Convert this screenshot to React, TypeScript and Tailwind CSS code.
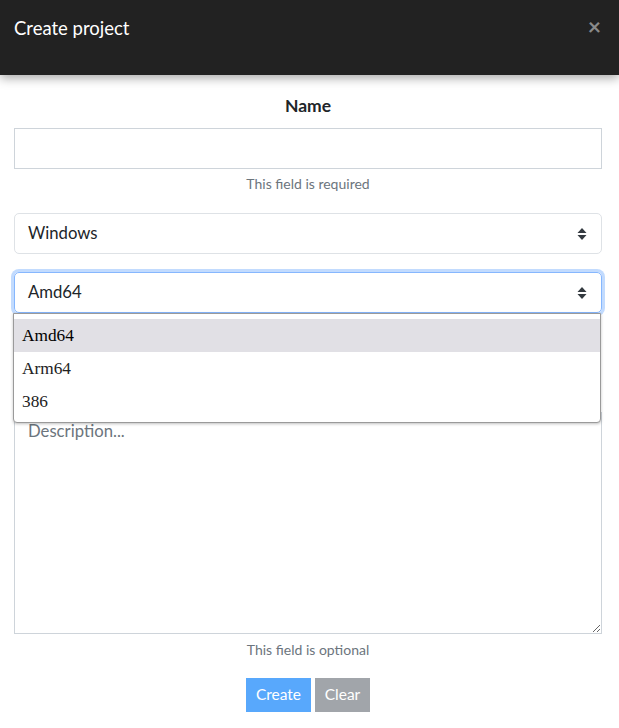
import { useState } from "react";

const archList = ["Amd64", "Arm64", "386"];

// Up/down caret used by the selects
const SortIcon = () => (
  <svg width="10" height="14" viewBox="0 0 10 14" className="fill-[#343a40]">
    <path d="M5 1 L9.5 6 H0.5 Z" />
    <path d="M5 13 L9.5 8 H0.5 Z" />
  </svg>
);

const App = () => {
  // States
  const [name, setName] = useState("");
  const [description, setDescription] = useState("");
  const [hovered] = useState("Amd64");

  return (
    <div className="min-h-[728px] bg-white font-['Lato','Open_Sans',sans-serif] text-[#212529]">
      {/* <============Header Part ============> */}
      <div className="relative z-10 flex h-[75px] items-start justify-between bg-[#222222] pl-[14px] pr-[14px] pt-[14px] shadow-[0_3px_10px_rgba(0,0,0,0.35)]">
        <h2 className="text-[18.5px] leading-[28px] text-white">Create project</h2>
        <button className="mr-[4px] mt-[-2px] text-[23px] font-bold leading-[28px] text-[#8a8a8a]">
          ×
        </button>
      </div>

      {/* <============Form ============> */}
      <div className="flex flex-col pl-[14px] pr-[17px] pt-[19px]">
        <label className="text-center text-[17.5px] font-bold leading-[24px] text-[#212529]">
          Name
        </label>
        <input
          className="mt-[10px] h-[41px] w-full border border-[#ced4da] px-3 text-[16px] outline-none"
          value={name}
          onChange={(e) => setName(e.target.value)}
        />
        <p className="mt-[5px] text-center text-[14px] leading-[20px] text-[#6c757d]">
          This field is required
        </p>

        <div className="mt-[19px] flex h-[41px] items-center justify-between rounded-[5px] border border-[#dee2e6] pl-[13px] pr-[14px] text-[16.7px] text-[#212529]">
          <span>Windows</span>
          <SortIcon />
        </div>

        <div className="relative mt-[18px]">
          <div className="flex h-[41px] items-center justify-between rounded-[5px] border border-[#86b7fe] pl-[13px] pr-[14px] text-[16.7px] text-[#212529] shadow-[0_0_0_3px_rgba(13,110,253,0.25)]">
            <span>Amd64</span>
            <SortIcon />
          </div>
          {/* Open option list */}
          <div className="absolute left-[-1px] top-[41px] z-20 w-[588px] rounded-b-[4px] border border-[#9a9a9a] bg-white pb-[4px] pt-[5px] font-['Liberation_Serif',serif] text-[17.3px] text-[#222] shadow-[0_1px_3px_rgba(0,0,0,0.25)]">
            {archList.map((arch) => (
              <div
                key={arch}
                className={`flex h-[33px] items-center px-[8px] ${
                  arch === hovered ? "bg-[#e1e0e5] text-black" : ""
                }`}
              >
                {arch}
              </div>
            ))}
          </div>
        </div>

        <textarea
          className="mt-[99px] h-[222px] w-full border border-[#ced4da] px-[13px] py-[6px] text-[16.7px] leading-[24px] outline-none placeholder:text-[#6c757d]"
          placeholder="Description..."
          value={description}
          onChange={(e) => setDescription(e.target.value)}
        />
        <p className="mt-[6px] text-center text-[14px] leading-[20px] text-[#6c757d]">
          This field is optional
        </p>

        <div className="mt-[18px] flex justify-center gap-[4px]">
          <button className="h-[34px] w-[65px] bg-[#58a8fc] text-[15.5px] text-white">Create</button>
          <button className="h-[34px] w-[55px] bg-[#a1a5aa] text-[15.5px] text-white">Clear</button>
        </div>
      </div>
    </div>
  );
};

export default App;
